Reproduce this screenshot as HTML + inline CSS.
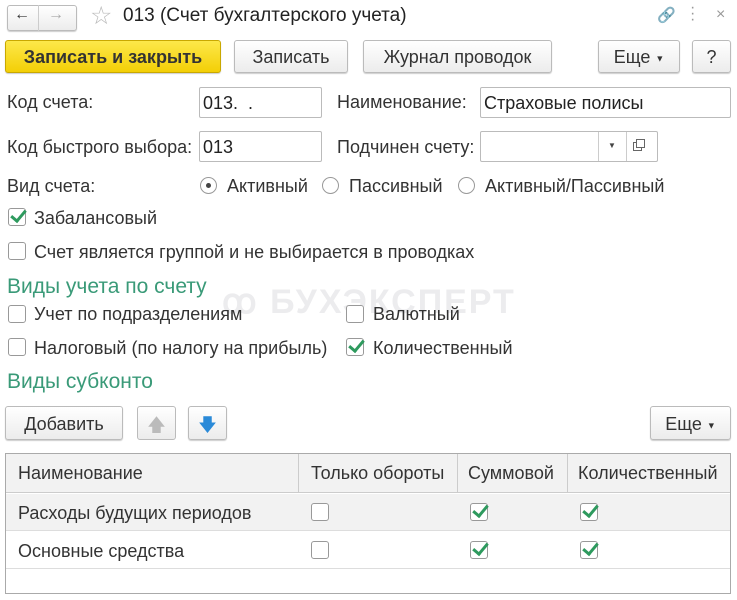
<!DOCTYPE html>
<html><head><meta charset="utf-8"><style>
*{box-sizing:border-box}
body{margin:0;width:737px;height:600px;background:#fff;font-family:"Liberation Sans",Arial,sans-serif;font-size:18px;color:#333;position:relative;overflow:hidden}
.a{position:absolute;white-space:nowrap}
.btn{position:absolute;border:1px solid #bbb;border-radius:3px;background:linear-gradient(#fff,#ececec);box-shadow:0 1px 1px rgba(0,0,0,.2);text-align:center;color:#333}
.inp{position:absolute;border:1px solid #bbb;border-radius:2px;background:#fff;height:31px;padding:5px 3px;color:#222}
.cb{position:absolute;width:18px;height:18px;border:1px solid #999;border-radius:3px;background:#fff}
.rd{position:absolute;width:17px;height:17px;border:1px solid #999;border-radius:50%;background:#fff}
.g{position:absolute;color:#3a9a78;font-size:21px;white-space:nowrap}
.ck::after{content:"";position:absolute;left:5px;top:-2px;width:6px;height:12px;border:solid #2e9a5e;border-width:0 3px 3px 0;transform:rotate(40deg)}
</style></head><body>
<div class="btn" style="left:7px;top:5px;width:70px;height:26px"></div>
<div class="a" style="left:38px;top:5px;height:26px;border-left:1px solid #ccc"></div>
<div class="a" style="left:14px;top:6px;font-size:16px;color:#333;font-weight:bold">&#8592;</div>
<div class="a" style="left:48px;top:6px;font-size:16px;color:#aaa;font-weight:bold">&#8594;</div>
<div class="a" style="left:90px;top:1px;font-size:25px;color:#bbb">☆</div>
<div class="a" style="left:123px;top:5px;font-size:19px;color:#222">013 (Счет бухгалтерского учета)</div>
<div class="a" style="left:657px;top:6px;font-size:15px;color:#999">&#128279;</div>
<div class="a" style="left:690px;top:5px;font-size:16px;color:#999;line-height:6px">·<br>·<br>·</div>
<div class="a" style="left:716px;top:6px;font-size:16px;color:#999">×</div>

<div class="btn" style="left:5px;top:40px;width:216px;height:33px;background:linear-gradient(#fde84a,#f3cf06);border-color:#c9a800;font-weight:bold;padding-top:6px;color:#333">Записать и закрыть</div>
<div class="btn" style="left:234px;top:40px;width:114px;height:33px;padding-top:6px">Записать</div>
<div class="btn" style="left:363px;top:40px;width:189px;height:33px;padding-top:6px">Журнал проводок</div>
<div class="btn" style="left:598px;top:40px;width:82px;height:33px;padding-top:6px">Еще <span style="font-size:9px;vertical-align:middle">▼</span></div>
<div class="btn" style="left:692px;top:40px;width:39px;height:33px;padding-top:6px">?</div>

<div class="a" style="left:7px;top:92px">Код счета:</div>
<div class="inp" style="left:199px;top:87px;width:123px">013.&nbsp;&nbsp;.</div>
<div class="a" style="left:337px;top:92px">Наименование:</div>
<div class="inp" style="left:480px;top:87px;width:251px">Страховые полисы</div>

<div class="a" style="left:7px;top:137px">Код быстрого выбора:</div>
<div class="inp" style="left:199px;top:131px;width:123px">013</div>
<div class="a" style="left:337px;top:137px">Подчинен счету:</div>
<div class="inp" style="left:480px;top:131px;width:178px"></div>
<div class="a" style="left:598px;top:132px;height:29px;border-left:1px solid #ccc"></div>
<div class="a" style="left:626px;top:132px;height:29px;border-left:1px solid #ccc"></div>
<div class="a" style="left:608px;top:141px;font-size:8px;color:#444">▼</div>
<div class="a" style="left:633px;top:142px;width:9px;height:9px;border:1px solid #666"></div>
<div class="a" style="left:636px;top:139px;width:9px;height:9px;border:1px solid #666;background:#fff"></div>

<div class="a" style="left:7px;top:176px">Вид счета:</div>
<div class="rd" style="left:200px;top:177px"></div><div class="a" style="left:206px;top:183px;width:5px;height:5px;border-radius:50%;background:#444"></div>
<div class="a" style="left:227px;top:176px">Активный</div>
<div class="rd" style="left:322px;top:177px"></div><div class="a" style="left:349px;top:176px">Пассивный</div>
<div class="rd" style="left:458px;top:177px"></div><div class="a" style="left:485px;top:176px">Активный/Пассивный</div>

<div class="cb ck" style="left:8px;top:208px"></div><div class="a" style="left:34px;top:208px">Забалансовый</div>
<div class="cb" style="left:8px;top:242px"></div><div class="a" style="left:34px;top:242px">Счет является группой и не выбирается в проводках</div>

<div class="a" style="left:222px;top:282px;font-size:34px;font-weight:bold;color:#ececee;letter-spacing:2px">ꝏ БУХЭКСПЕРТ</div>
<div class="g" style="left:7px;top:275px">Виды учета по счету</div>
<div class="cb" style="left:8px;top:305px"></div><div class="a" style="left:34px;top:304px">Учет по подразделениям</div>
<div class="cb" style="left:346px;top:305px"></div><div class="a" style="left:373px;top:304px">Валютный</div>
<div class="cb" style="left:8px;top:338px"></div><div class="a" style="left:34px;top:338px">Налоговый (по налогу на прибыль)</div>
<div class="cb ck" style="left:346px;top:338px"></div><div class="a" style="left:373px;top:338px">Количественный</div>
<div class="g" style="left:7px;top:370px">Виды субконто</div>

<div class="btn" style="left:5px;top:406px;width:118px;height:34px;padding-top:7px">Добавить</div>
<div class="btn" style="left:137px;top:406px;width:39px;height:34px;padding-top:6px;color:#bbb;font-size:18px;box-shadow:none">🡅</div>
<div class="btn" style="left:188px;top:406px;width:39px;height:34px;padding-top:6px;color:#2a8ad8;font-size:18px">🡇</div>
<div class="btn" style="left:650px;top:406px;width:81px;height:34px;padding-top:7px">Еще <span style="font-size:9px;vertical-align:middle">▼</span></div>

<div class="a" style="left:5px;top:453px;width:726px;height:141px;border:1px solid #aaa"></div>
<div class="a" style="left:6px;top:454px;width:724px;height:39px;background:#f2f2f2;border-bottom:1px solid #ccc"></div>
<div class="a" style="left:6px;top:494px;width:724px;height:37px;background:#f2f2f2;border-bottom:1px solid #ddd"></div>
<div class="a" style="left:6px;top:531px;width:724px;height:38px;border-bottom:1px solid #ddd"></div>
<div class="a" style="left:298px;top:454px;height:39px;border-left:1px solid #ccc"></div>
<div class="a" style="left:457px;top:454px;height:39px;border-left:1px solid #ccc"></div>
<div class="a" style="left:567px;top:454px;height:39px;border-left:1px solid #ccc"></div>
<div class="a" style="left:18px;top:463px">Наименование</div>
<div class="a" style="left:311px;top:463px">Только обороты</div>
<div class="a" style="left:468px;top:463px">Суммовой</div>
<div class="a" style="left:578px;top:463px">Количественный</div>
<div class="a" style="left:18px;top:503px">Расходы будущих периодов</div>
<div class="cb" style="left:311px;top:503px"></div><div class="cb ck" style="left:470px;top:503px"></div><div class="cb ck" style="left:580px;top:503px"></div>
<div class="a" style="left:18px;top:541px">Основные средства</div>
<div class="cb" style="left:311px;top:541px"></div><div class="cb ck" style="left:470px;top:541px"></div><div class="cb ck" style="left:580px;top:541px"></div>
</body></html>
